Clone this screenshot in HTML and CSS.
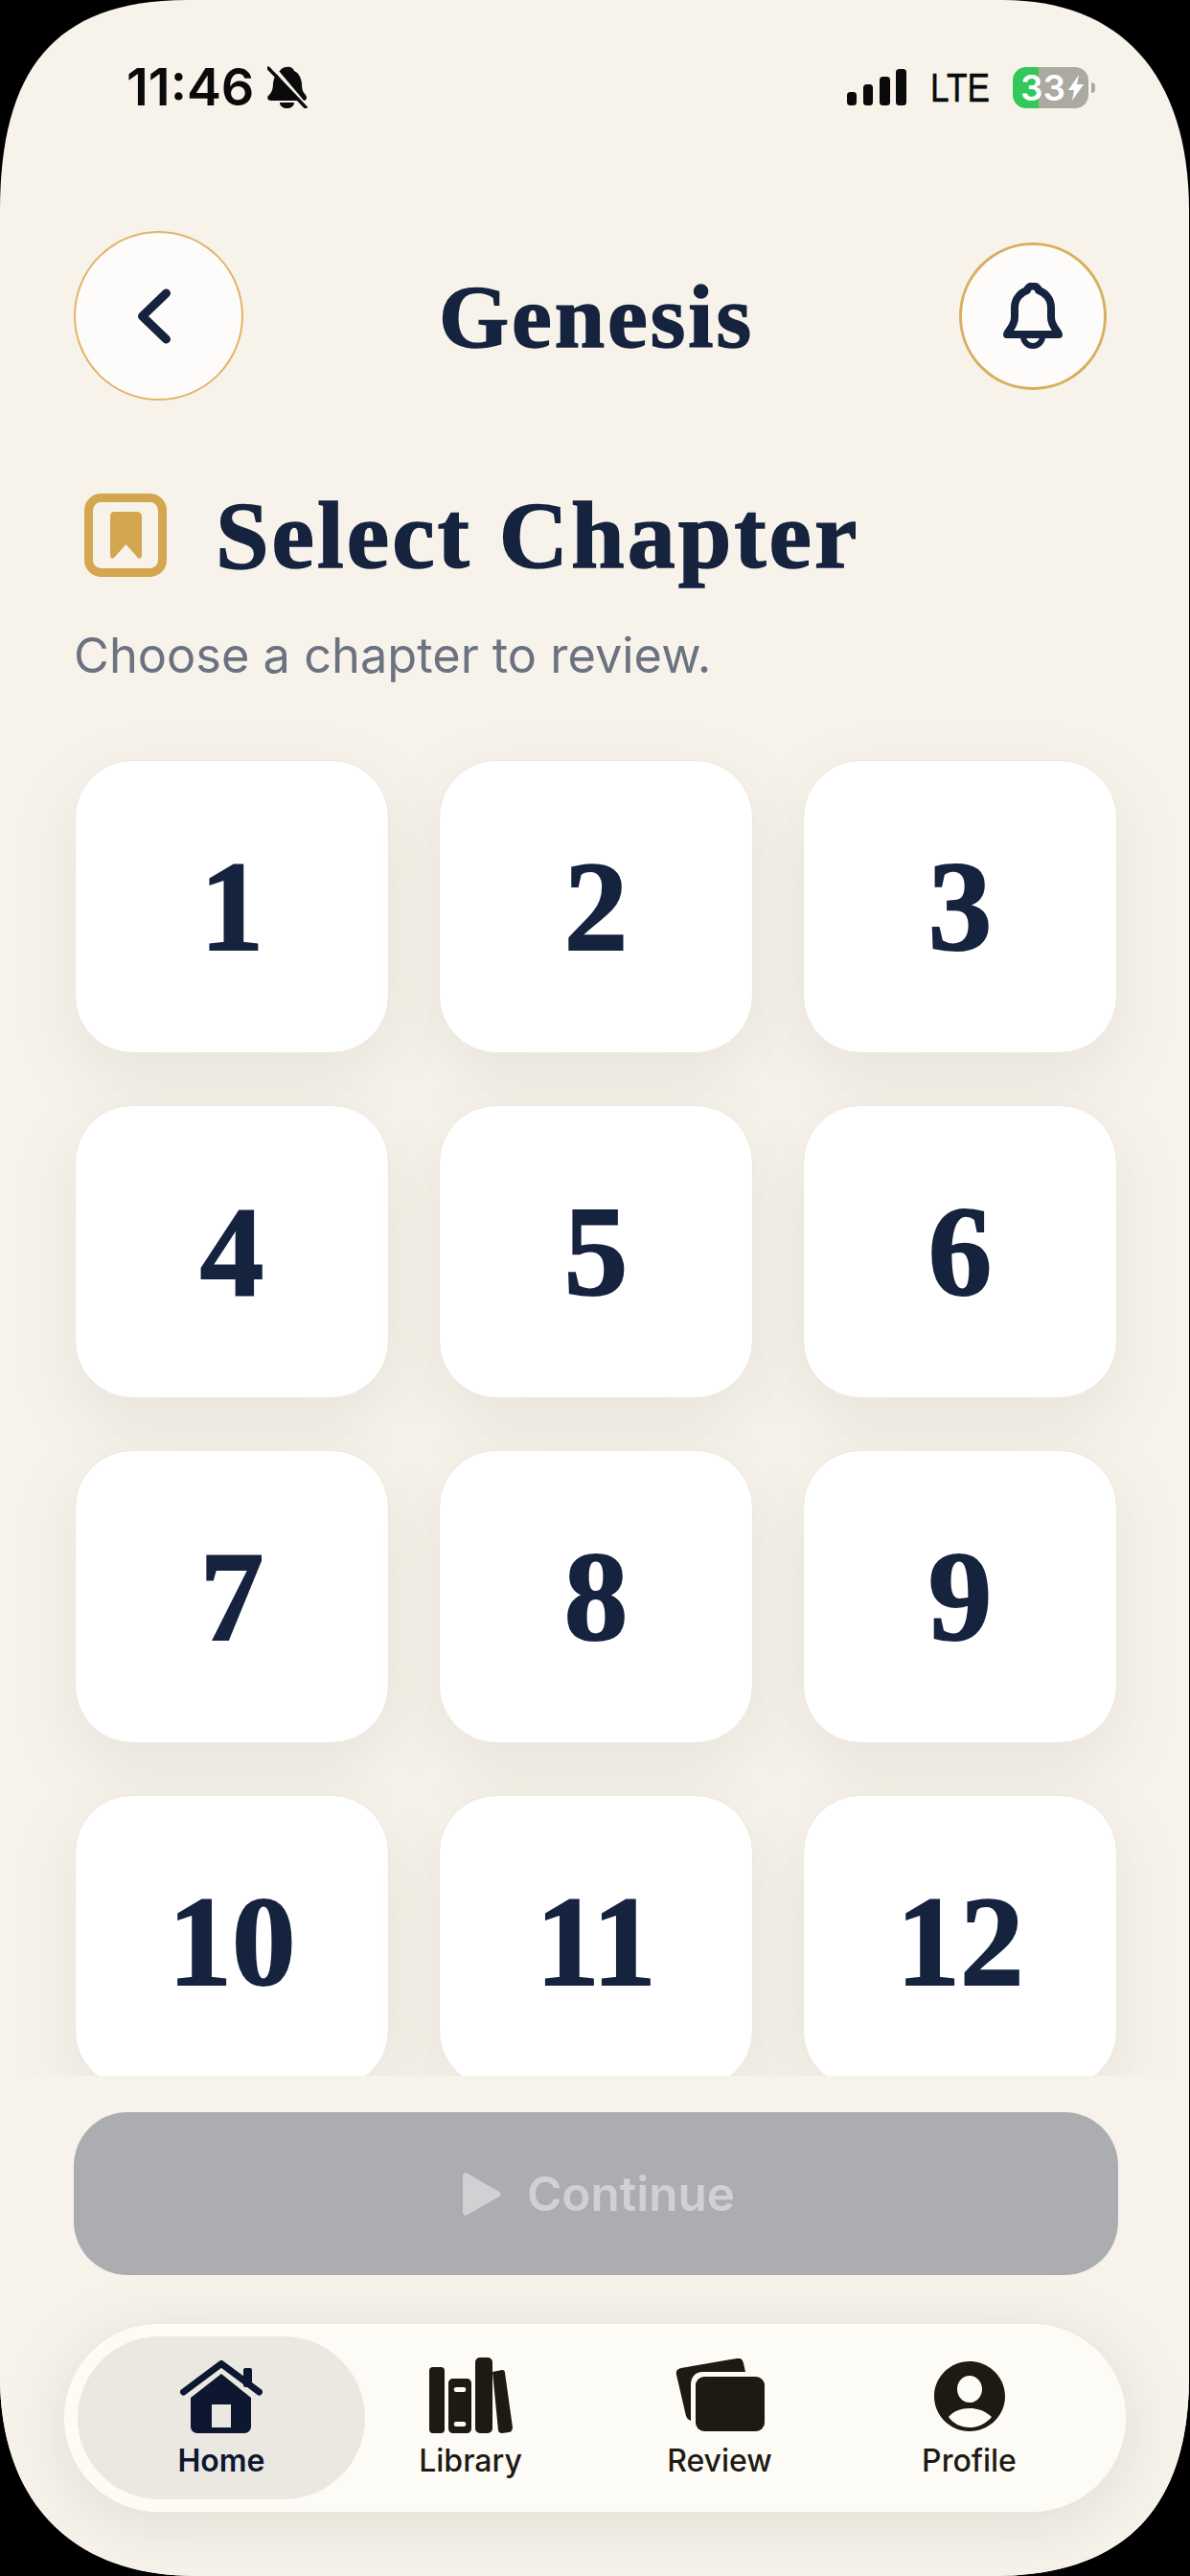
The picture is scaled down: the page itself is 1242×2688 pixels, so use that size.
FILE: index.html
```html
<!DOCTYPE html>
<html lang="en">
<head>
    <meta charset="UTF-8">
    <meta name="viewport" content="width=device-width, initial-scale=1.0">
    <title>Genesis</title>
    <link rel="stylesheet" href="styles.css">
</head>
<body>
    <div class="screen">
        <div class="status-bar">
            <div class="status-left">
                <span class="time">11:46</span>
                <svg class="mute-icon" viewBox="0 0 42 44" width="42" height="44">
                    <path d="M20 1C24 0 27 2 28 5C33 7 35 12 36 18C36 24 37 27 40 30C42 33 41 36 37 36H4C0 36 -1 32 2 30C5 27 6 23 6 18C7 12 9 7 13 5C14 3 17 1 20 1Z" fill="#0a0a0a"/>
                    <path d="M13 38H28C28 42 24 44 20.500 44C17 44 13 42 13 38Z" fill="#0a0a0a"/>
                    <path d="M6 1L44 46" stroke="#f7f3ea" stroke-width="4"/>
                    <path d="M1 2L40 43" stroke="#0a0a0a" stroke-width="3.500" stroke-linecap="round"/>
                </svg>
            </div>
            <div class="status-right">
                <svg class="signal" viewBox="0 0 62 38" width="62" height="38">
                    <rect x="0" y="24" width="10" height="14" rx="3.500"/>
                    <rect x="17" y="16" width="10" height="22" rx="3.500"/>
                    <rect x="34" y="8" width="11" height="30" rx="3.500"/>
                    <rect x="51" y="0" width="11" height="38" rx="3.500"/>
                </svg>
                <span class="network">LTE</span>
                <div class="battery">
                    <span>33</span>
                    <svg viewBox="0 0 16 27" width="16" height="27"><path d="M11 0L0 16H6L4 27L16 10H9Z" fill="#fff"/></svg>
                </div>
                <div class="battery-nub"></div>
            </div>
        </div>

        <div class="header">
            <button class="round-btn back-btn">
                <svg viewBox="0 0 35 58" width="35" height="58"><path d="M30.500 5L5.500 29L30.500 53" class="line-icon" stroke-width="9"/></svg>
            </button>
            <h2 class="page-title">Genesis</h2>
            <button class="round-btn bell-btn">
                <svg viewBox="0 0 64 69" width="64" height="69">
                    <path d="M5 54C5 51 13 46 13 36V26C13 16 20 10 26 8C27 2 37 2 38 8C44 10 51 16 51 26V36C51 46 59 51 59 54Z" class="line-icon" stroke-width="8"/>
                    <path d="M22 56C22 62 27 66 32 66C37 66 42 62 42 56" class="line-icon" stroke-width="6"/>
                </svg>
            </button>
        </div>

        <div class="section-title">
            <svg viewBox="0 0 86 87" width="86" height="87">
                <rect x="4.500" y="4.500" width="77" height="78" rx="13" fill="none" stroke="#d4a64f" stroke-width="9"/>
                <path d="M27 24C27 20 29 19 32 19H54C57 19 60 20 60 24V64C60 68 57 69 55 66L43.500 53L32 66C29 69 27 68 27 64Z" fill="#d4a64f"/>
            </svg>
            <h1>Select Chapter</h1>
        </div>
        <p class="subtitle">Choose a chapter to review.</p>

        <div class="chapter-scroll">
            <div class="chapter-grid">
                <div class="chapter">1</div>
                <div class="chapter">2</div>
                <div class="chapter">3</div>
                <div class="chapter">4</div>
                <div class="chapter">5</div>
                <div class="chapter">6</div>
                <div class="chapter">7</div>
                <div class="chapter">8</div>
                <div class="chapter">9</div>
                <div class="chapter">10</div>
                <div class="chapter">11</div>
                <div class="chapter">12</div>
            </div>
        </div>

        <div class="bottom-panel">
            <button class="continue-btn">
                <svg viewBox="0 0 40 45" width="40" height="45"><path d="M0 4C0 1 3 -1 5 1L38 20C40 21 40 24 38 25L5 44C3 46 0 44 0 41Z" fill="#d0d1d3"/></svg>
                <span>Continue</span>
            </button>

            <div class="nav">
                <div class="nav-item active">
                    <div class="nav-icon">
                        <svg viewBox="0 0 86 76" width="86" height="76" fill="#0d1730">
                            <rect x="66" y="8" width="9" height="20" rx="2"/>
                            <path d="M3.500 33L43 3.500L82.500 33" fill="none" stroke="#0d1730" stroke-width="7" stroke-linecap="round" stroke-linejoin="round"/>
                            <path fill-rule="evenodd" d="M43 14L74 39V69C74 73 71 76 67 76H18C14 76 11 73 11 69V39ZM33 46V70H53V46Z"/>
                        </svg>
                    </div>
                    <span>Home</span>
                </div>
                <div class="nav-item">
                    <div class="nav-icon">
                        <svg viewBox="0 0 87 79" width="87" height="79" fill="#1d1a14">
                            <rect x="0" y="10" width="16" height="69" rx="4"/>
                            <path fill-rule="evenodd" d="M25 22H39C42 22 44 24 44 27V74C44 77 42 79 39 79H25C22 79 20 77 20 74V27C20 24 22 22 25 22ZM28 31C25 31 25 36 28 36H36C39 36 39 31 36 31ZM28 67C25 67 25 72 28 72H36C39 72 39 67 36 67Z"/>
                            <rect x="48" y="0" width="18" height="79" rx="5"/>
                            <path d="M66 15L76 13C78 13 79 14 79 16L87 73C87 76 85 78 83 78L76 79C74 79 72 78 72 76Z"/>
                        </svg>
                    </div>
                    <span>Library</span>
                </div>
                <div class="nav-item">
                    <div class="nav-icon">
                        <svg class="icon-lift" viewBox="0 0 93 76" width="93" height="76" fill="#1d1a14">
                            <path d="M1 17C0 13 2 11 6 10L64 0C68 -1 70 1 71 5L73 14H29C20 14 16 20 16 28V65C13 64 12 62 11 60Z"/>
                            <rect x="21" y="19" width="72" height="57" rx="9"/>
                        </svg>
                    </div>
                    <span>Review</span>
                </div>
                <div class="nav-item">
                    <div class="nav-icon">
                        <svg class="icon-lift" viewBox="0 0 74 73" width="74" height="73">
                            <path fill="#1d1a14" fill-rule="evenodd" d="M37 0C57 0 74 16 74 36.500C74 57 57 73 37 73C17 73 0 57 0 36.500C0 16 17 0 37 0ZM37 15C30 15 24 21 24 29C24 37 30 43 37 43C44 43 50 37 50 29C50 21 44 15 37 15ZM15 58C20 65 28 69 37 69C46 69 54 65 60 58C54 52 46 49 37 49C28 49 20 52 15 58Z"/>
                        </svg>
                    </div>
                    <span>Profile</span>
                </div>
            </div>
        </div>
    </div>
</body>
</html>
```

FILE: styles.css
```css
* {
    box-sizing: border-box;
}
html, body {
    margin: 0;
    background: #000;
}
.screen {
    width: 1242px;
    height: 2688px;
    display: flex;
    flex-direction: column;
    background: #f7f3eb;
    overflow: hidden;
    font-family: Inter, 'Noto Sans', sans-serif;
    clip-path: path('M195 0H1047C1167 0 1241 75 1241 220V2480C1241 2613 1177 2688 1037 2688H205C65 2688 0 2600 0 2480V220C0 75 55 0 195 0Z');
}

/* status bar */
.status-bar {
    height: 113px;
    padding: 69px 99px 0 132px;
    display: flex;
    justify-content: space-between;
    align-items: center;
}
.status-left, .status-right {
    display: flex;
    align-items: center;
}
.time {
    font-size: 54px;
    font-weight: 600;
    line-height: 44px;
    color: #0a0a0a;
}
.mute-icon {
    margin-left: 14px;
}
.signal {
    fill: #0a0a0a;
}
.network {
    width: 62px;
    margin-left: 25px;
    transform: scaleX(0.82);
    transform-origin: left center;
    font-family: 'Liberation Sans', sans-serif;
    font-size: 43px;
    line-height: 44px;
    color: #0a0a0a;
    -webkit-text-stroke: 0.5px #0a0a0a;
}
.battery {
    width: 79px;
    height: 43px;
    margin-left: 24px;
    padding-left: 8px;
    display: flex;
    align-items: center;
    gap: 3px;
    border-radius: 14px;
    background: linear-gradient(90deg, #34c759 34%, #aaa9a2 34%);
    color: #fff;
    font-size: 37px;
    font-weight: 600;
}
.battery-nub {
    width: 4px;
    height: 11px;
    margin-left: 3px;
    border-radius: 0 4px 4px 0;
    background: #aaa9a2;
}

/* header */
.header {
    margin-top: 128px;
    padding: 0 87px 0 77px;
    display: grid;
    grid-template-columns: 177px 1fr 154px;
    align-items: center;
}
.round-btn {
    padding: 0;
    display: flex;
    align-items: center;
    justify-content: center;
    border-radius: 50%;
    background: #fdfcfa;
}
.back-btn {
    width: 177px;
    height: 177px;
    padding-right: 10px;
    border: 2px solid #e0b566;
}
.bell-btn {
    width: 154px;
    height: 154px;
    border: 3px solid #d9ae5f;
}
.line-icon {
    fill: none;
    stroke: #16233f;
    stroke-linecap: round;
    stroke-linejoin: round;
}
.page-title {
    margin: 0;
    padding-right: 10px;
    text-align: center;
    font-family: 'Liberation Serif', serif;
    font-size: 94px;
    font-weight: bold;
    letter-spacing: 3px;
    color: #16233f;
    -webkit-text-stroke: 1.500px #16233f;
}

/* section heading */
.section-title {
    margin-top: 97px;
    padding-left: 88px;
    display: flex;
    align-items: center;
    gap: 51px;
}
.section-title h1 {
    margin: 0;
    font-family: 'Liberation Serif', serif;
    font-size: 100px;
    line-height: 87px;
    font-weight: bold;
    letter-spacing: 3px;
    color: #16233f;
    -webkit-text-stroke: 1.500px #16233f;
}
.subtitle {
    margin: 52px 0 0;
    padding-left: 77px;
    font-size: 50.500px;
    line-height: 60px;
    color: #6b7280;
}

/* chapters */
.chapter-scroll {
    flex: 1;
    min-height: 0;
    overflow: hidden;
    padding: 79px 76px 0 78px;
}
.chapter-grid {
    display: grid;
    grid-template-columns: repeat(3, 328px);
    grid-auto-rows: 306px;
    column-gap: 52px;
    row-gap: 54px;
}
.chapter {
    display: flex;
    align-items: center;
    justify-content: center;
    background: #fff;
    border: 1px solid #ece8df;
    border-radius: 60px;
    box-shadow: 0 24px 70px rgba(100, 95, 75, 0.1);
    font-family: 'Liberation Serif', serif;
    font-size: 133px;
    font-weight: bold;
    color: #16233f;
    -webkit-text-stroke: 2px #16233f;
}

/* bottom panel */
.bottom-panel {
    height: 522px;
    flex-shrink: 0;
    padding-top: 38px;
    background: #f7f3eb;
    position: relative;
}
.continue-btn {
    width: 1090px;
    height: 170px;
    margin-left: 77px;
    padding: 0 6px 0 12px;
    display: flex;
    align-items: center;
    justify-content: center;
    gap: 27px;
    border: none;
    border-radius: 56px;
    background: #acadb1;
    color: #d0d1d3;
    font-family: Inter, sans-serif;
    font-size: 49.500px;
    font-weight: 600;
}
.nav {
    width: 1108px;
    height: 196px;
    margin: 51px 0 0 67px;
    padding: 12px 0 12px 33px;
    display: grid;
    grid-template-columns: 260px 260px 260px 261px;
    background: #fdfbf5;
    border: 1px solid #fefdf9;
    border-radius: 98px;
    box-shadow: 0 12px 70px rgba(90, 85, 65, 0.14);
}
.nav-item {
    padding-top: 22px;
    display: flex;
    flex-direction: column;
    align-items: center;
    color: #1d1a14;
    font-size: 32px;
    line-height: 36px;
    font-weight: 500;
}
.nav-item.active {
    margin: 0 -20px;
    border-radius: 85px;
    background: #eae8e1;
    color: #0d1730;
    font-weight: 600;
}
.nav-icon {
    height: 79px;
    margin-bottom: 11px;
    display: flex;
    align-items: flex-end;
}
.icon-lift {
    margin-bottom: 2px;
}
```
